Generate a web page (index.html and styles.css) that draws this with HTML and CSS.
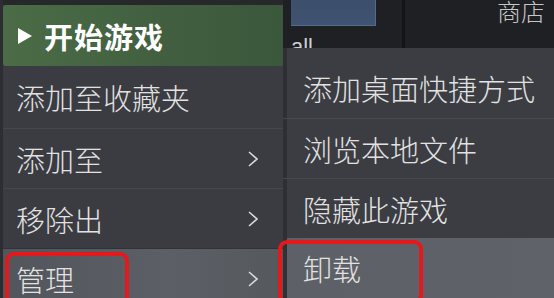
FILE: index.html
```html
<!DOCTYPE html>
<html lang="zh">
<head>
<meta charset="utf-8">
<link rel="stylesheet" href="styles.css">
</head>
<body>
<div class="screen">
  <div class="menu-left">
    <div class="play-btn">
      <span class="play-tri"></span>
      <span class="play-text">开始游戏</span>
    </div>
    <div class="item first">添加至收藏夹</div>
    <div class="item sep">添加至<svg class="chev" viewBox="0 0 10 16" width="10" height="16"><polyline points="1,1 9,8 1,15" fill="none" stroke="#d8d8d8" stroke-width="1.6"/></svg></div>
    <div class="item sep">移除出<svg class="chev" viewBox="0 0 10 16" width="10" height="16"><polyline points="1,1 9,8 1,15" fill="none" stroke="#d8d8d8" stroke-width="1.6"/></svg></div>
    <div class="item sep active">管理<svg class="chev" viewBox="0 0 10 16" width="10" height="16"><polyline points="1,1 9,8 1,15" fill="none" stroke="#d8d8d8" stroke-width="1.6"/></svg><span class="mark mark-left"></span></div>
  </div>
  <div class="right-col">
    <div class="bg-page">
      <div class="bg-tile">
        <div class="bg-thumb"></div>
        <div class="bg-all">all</div>
      </div>
      <div class="bg-divider"></div>
      <div class="bg-store">商店</div>
    </div>
    <div class="submenu">
      <div class="sub-item">添加桌面快捷方式</div>
      <div class="sub-item sep">浏览本地文件</div>
      <div class="sub-item sep">隐藏此游戏</div>
      <div class="sub-item active">卸载<span class="mark mark-right"></span></div>
    </div>
  </div>
</div>
</body>
</html>
```
FILE: styles.css
```css
* { box-sizing: border-box; }
html, body { margin: 0; padding: 0; }
body {
  width: 554px;
  height: 298px;
  overflow: hidden;
  background: #1f2125;
  font-family: "Noto Sans CJK SC", "Noto Sans", sans-serif;
  color: #e4e4e4;
}
.screen {
  display: flex;
  width: 554px;
  height: 298px;
  overflow: hidden;
}
.menu-left {
  width: 283px;
  flex: none;
  display: flex;
  flex-direction: column;
  padding-top: 5px;
  background: linear-gradient(to bottom, #26282c 0, #26282c 5px, #3a3c41 5px);
  border-left: 3px solid #2c2e32;
}
.play-btn {
  height: 61px;
  display: flex;
  align-items: center;
  padding-left: 15px;
  gap: 12px;
  background: linear-gradient(to right, #4b6c46, #415f40 60%, #3b573c);
  border-radius: 3px 0 0 3px;
  flex: none;
}
.play-tri {
  width: 0;
  height: 0;
  border-top: 8px solid transparent;
  border-bottom: 8px solid transparent;
  border-left: 14px solid #ffffff;
}
.play-text {
  font-size: 29px;
  font-weight: 700;
  color: #ffffff;
  letter-spacing: 1px;
}
.item {
  position: relative;
  height: 60px;
  flex: none;
  display: flex;
  align-items: center;
  padding-left: 13px;
  font-size: 29px;
  font-weight: 300;
  color: #e2e2e2;
}
.item.first { height: 62px; }
.item.sep { border-top: 1px solid #45474c; }
.item.active {
  background: linear-gradient(to right, #52555b, #5c5f65 60%, #55585d);
  border-top-color: #303236;
}
.chev {
  position: absolute;
  left: 245px;
  top: 50%;
  margin-top: -8px;
}
.right-col {
  flex: 1;
  display: flex;
  flex-direction: column;
  min-width: 0;
}
.bg-page {
  height: 48px;
  flex: none;
  display: flex;
  background: #1e2024;
  overflow: hidden;
}
.bg-tile {
  width: 119px;
  flex: none;
  padding-left: 8px;
  display: flex;
  flex-direction: column;
  overflow: hidden;
}
.bg-thumb {
  width: 85px;
  height: 26px;
  flex: none;
  background: linear-gradient(to bottom, #3c4f6d, #3f5472);
  border-right: 1px solid #55698a;
  border-bottom: 1px solid #55698a;
}
.bg-all {
  flex: none;
  font-family: "Liberation Sans", sans-serif;
  font-size: 22px;
  line-height: 22px;
  margin-top: 10px;
  color: #cfcfcf;
}
.bg-divider {
  width: 3px;
  flex: none;
  background: #141518;
}
.bg-store {
  margin-left: auto;
  margin-right: 9px;
  padding-top: 0;
  font-size: 24px;
  line-height: 26px;
  margin-top: -2px;
  font-weight: 300;
  color: #c6c6c6;
}
.submenu {
  flex: 1;
  display: flex;
  flex-direction: column;
  padding-top: 10px;
  background: linear-gradient(to right, #2d2f33 0, #2d2f33 4px, #3b3d42 4px);
}
.sub-item {
  position: relative;
  height: 60px;
  flex: none;
  display: flex;
  align-items: center;
  padding-left: 20px;
  font-size: 29px;
  font-weight: 300;
  color: #e2e2e2;
}
.sub-item.sep { border-top: 1px solid #46484d; }
.sub-item.active {
  background: linear-gradient(to right, #2f3135 0, #2f3135 4px, #5d6066 4px, #5f6268);
}
.mark {
  position: absolute;
  border: 4px solid #e3191c;
  border-radius: 9px;
  pointer-events: none;
}
.mark-left {
  left: 2px;
  top: 3px;
  width: 124px;
  height: 62px;
}
.mark-right {
  left: -5px;
  top: 2px;
  width: 145px;
  height: 64px;
}
```
